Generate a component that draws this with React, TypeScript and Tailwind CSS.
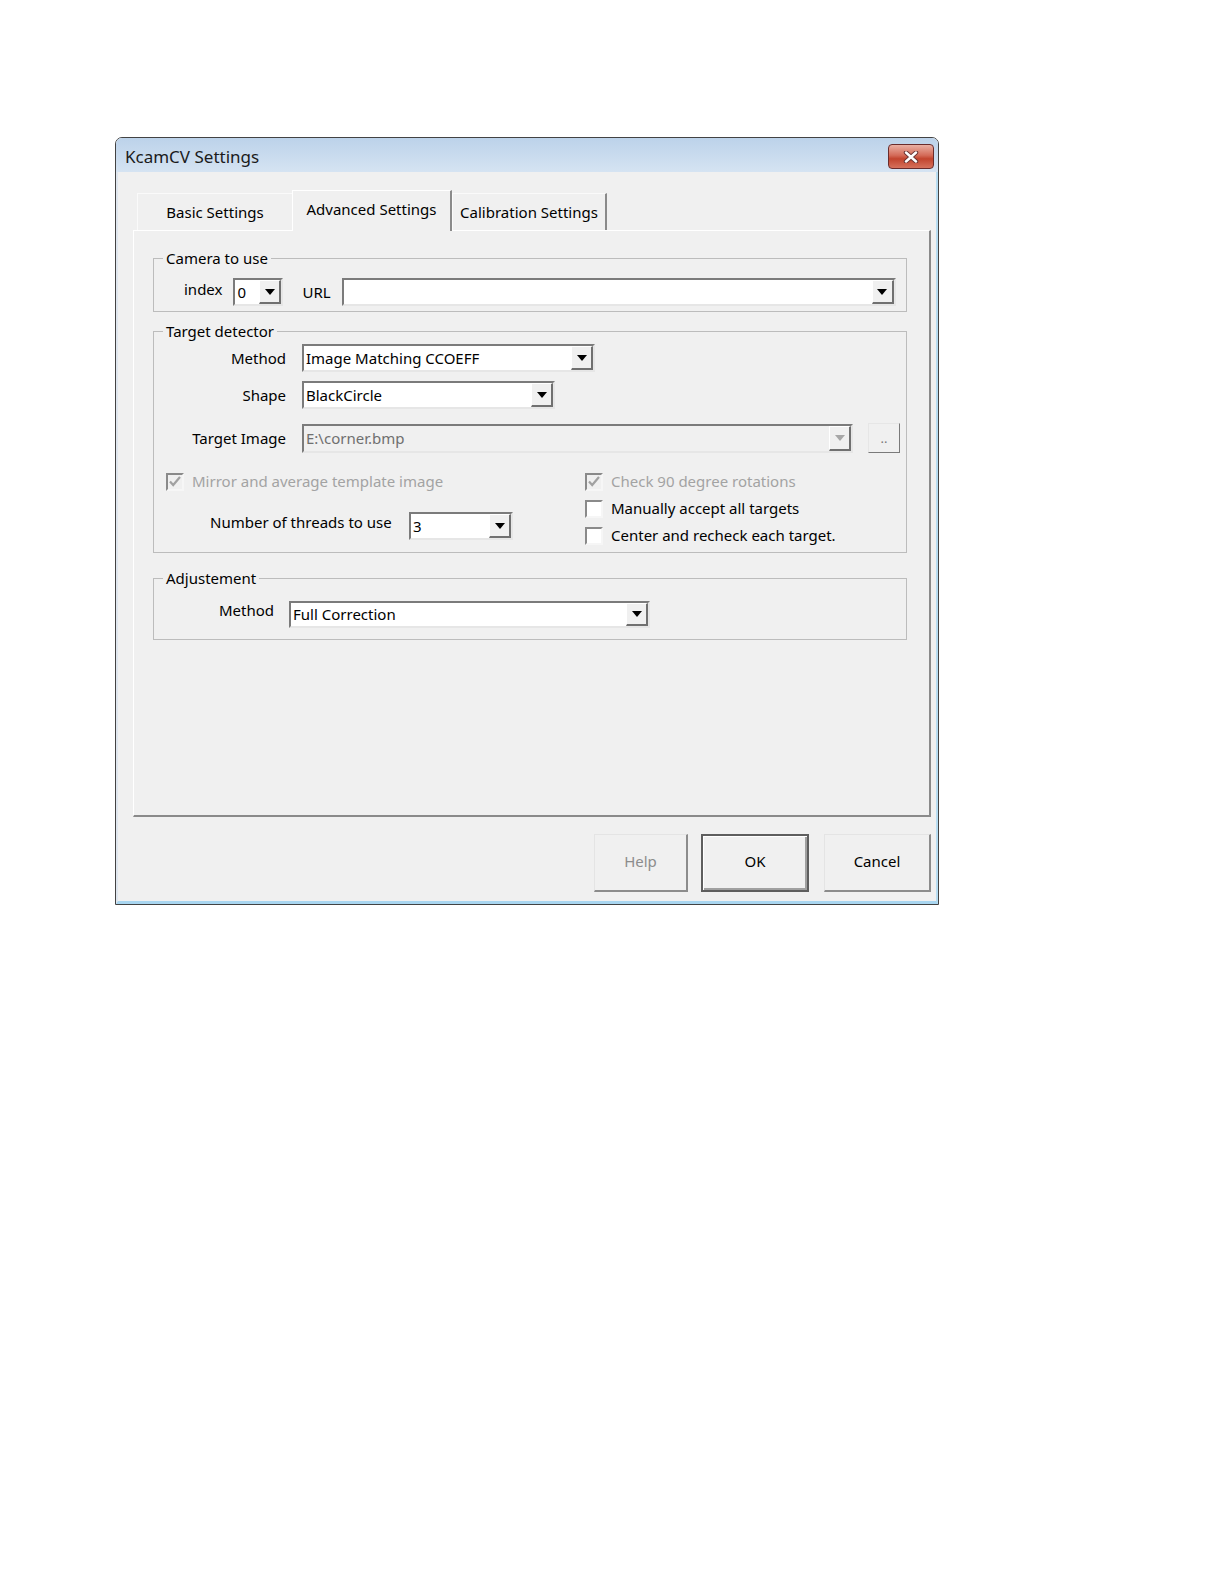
import React from "react"

function Arrow({ disabled }: { disabled?: boolean }) {
  return (
    <svg width="10" height="6" viewBox="0 0 10 6">
      <path d="M0 0h10L5 6z" fill={disabled ? "#a7a7a7" : "#000"} />
    </svg>
  )
}

function Combo({
  value,
  className,
  disabled,
}: {
  value: string
  className: string
  disabled?: boolean
}) {
  return (
    <div
      className={`flex border-2 border-t-[#7b7b7b] border-l-[#7b7b7b] border-r-[#e6e6e6] border-b-[#e6e6e6] ${
        disabled ? "bg-[#f0f0f0]" : "bg-white"
      } ${className}`}
    >
      <div
        className={`flex-1 flex items-center pl-[2px] text-[15px] leading-none ${
          disabled ? "text-[#6f6f6f]" : "text-black"
        }`}
      >
        {value}
      </div>
      <div className="w-[22px] flex items-center justify-center bg-[#f0f0f0] border-t border-l border-white border-r-2 border-b-2 border-r-[#707070] border-b-[#707070]">
        <Arrow disabled={disabled} />
      </div>
    </div>
  )
}

function Check({ label, checked, disabled }: { label: string; checked?: boolean; disabled?: boolean }) {
  return (
    <div className="flex items-center h-[27px]">
      <div
        className={`w-[18px] h-[18px] flex items-center justify-center border-2 border-t-[#8a8a8a] border-l-[#8a8a8a] border-r-[#f6f6f6] border-b-[#f6f6f6] ${
          disabled ? "bg-[#f0f0f0]" : "bg-white"
        }`}
      >
        {checked && (
          <svg width="12" height="11" viewBox="0 0 12 11">
            <path d="M1 5.5l3.2 3.5L11 1" fill="none" stroke="#a1a1a1" strokeWidth="2.2" />
          </svg>
        )}
      </div>
      <span className={`ml-[8px] text-[15px] ${disabled ? "text-[#a3a3a3]" : "text-black"}`}>{label}</span>
    </div>
  )
}

function Group({ title, className, children }: { title: string; className: string; children: React.ReactNode }) {
  return (
    <fieldset className={`border border-[#bcbcbc] ${className}`}>
      <legend className="ml-[9px] px-[3px] text-[15px] leading-[20px] text-black">{title}</legend>
      {children}
    </fieldset>
  )
}

const tabs = [
  { name: "Basic Settings", active: false },
  { name: "Advanced Settings", active: true },
  { name: "Calibration Settings", active: false },
]

export default function App() {
  return (
    <div className="min-h-[1584px] bg-white pt-[137px] pl-[115px] font-['Noto_Sans',sans-serif]">
      <div className="w-[824px] h-[768px] flex flex-col border border-[#434343] rounded-t-[7px] overflow-hidden">
        {/* title bar */}
        <div className="h-[34px] flex justify-between bg-[linear-gradient(to_bottom,#bcd2ea,#d5e3f2)]">
          <div className="pl-[9px] pt-[6px] text-[17px] text-[#1b1b1b]">KcamCV Settings</div>
          <div className="pt-[6px] pr-[4px]">
            <div className="w-[46px] h-[25px] rounded-[4px] border border-[#6a2c2c] flex items-center justify-center bg-[linear-gradient(to_bottom,#eab0a4,#d46b58_45%,#c2442e_60%,#d6715c)]">
              <svg width="16" height="12" viewBox="0 0 16 12">
                <path d="M3 1.5l10 9M13 1.5l-10 9" stroke="#6b3636" strokeWidth="4.4" strokeLinecap="round" />
                <path d="M3 1.5l10 9M13 1.5l-10 9" stroke="#fff" strokeWidth="2.4" strokeLinecap="round" />
              </svg>
            </div>
          </div>
        </div>

        {/* body */}
        <div className="flex-1 flex flex-col bg-[#f0f0f0] border-l-2 border-l-[#dfe6ee] border-r-2 border-r-[#b7dcf1] border-b-[3px] border-b-[#a9d6f0] pl-[15px] pr-[5px] pt-[18px]">
          {/* tabs */}
          <div className="h-[40px] flex items-end ml-[4px]">
            {tabs.map((t) =>
              t.active ? (
                <div
                  key={t.name}
                  className="relative z-10 -mb-px h-[41px] w-[160px] flex justify-center pt-[7px] bg-[#f0f0f0] border-t border-l border-white border-r-2 border-r-[#8a8a8a] text-[15px] text-black"
                >
                  {t.name}
                </div>
              ) : (
                <div
                  key={t.name}
                  className={`h-[37px] w-[155px] flex justify-center pt-[7px] border-t border-l border-t-[#fafafa] border-l-[#fafafa] text-[15px] text-black ${
                    t.name === "Calibration Settings" ? "border-r-2 border-r-[#8a8a8a]" : ""
                  }`}
                >
                  {t.name}
                </div>
              )
            )}
          </div>

          {/* panel */}
          <div className="h-[587px] flex flex-col border-t border-l border-white border-r-2 border-b-2 border-r-[#8a8a8a] border-b-[#8a8a8a] pl-[19px] pr-[22px] pt-[17px]">
            <Group title="Camera to use" className="pt-[10px] pb-[5px]">
              <div className="flex items-center h-[28px]">
                <span className="ml-[30px] -mt-[6px] text-[15px]">index</span>
                <Combo value="0" className="ml-[11px] w-[50px] h-[28px]" />
                <span className="ml-[19px] text-[15px]">URL</span>
                <Combo value="" className="ml-[11px] w-[554px] h-[28px]" />
              </div>
            </Group>

            <Group title="Target detector" className="mt-[9px] pt-[3px]">
              <div className="flex items-center">
                <span className="w-[132px] text-right text-[15px]">Method</span>
                <Combo value="Image Matching CCOEFF" className="ml-[16px] w-[293px] h-[28px]" />
              </div>
              <div className="flex items-center mt-[9px]">
                <span className="w-[132px] text-right text-[15px]">Shape</span>
                <Combo value="BlackCircle" className="ml-[16px] w-[253px] h-[28px]" />
              </div>
              <div className="flex items-center mt-[15px]">
                <span className="w-[132px] text-right text-[15px]">Target Image</span>
                <Combo value="E:\corner.bmp" disabled className="ml-[16px] w-[551px] h-[29px]" />
                <div className="ml-[15px] w-[32px] h-[30px] -mt-px flex items-center justify-center bg-[#f0f0f0] border border-[#e6e6e6] border-r-[#7a7a7a] border-b-[#7a7a7a] text-[13px] text-[#7a7a7a] leading-none">
                  ..
                </div>
              </div>
              <div className="flex mt-[15px] pb-[3px]">
                <div className="ml-[12px] w-[419px]">
                  <Check label="Mirror and average template image" checked disabled />
                  <div className="flex items-center mt-[17px] h-[28px]">
                    <span className="ml-[44px] w-[185px] -mt-[8px] text-[15px]">Number of threads to use</span>
                    <Combo value="3" className="ml-[14px] w-[104px] h-[28px]" />
                  </div>
                </div>
                <div>
                  <Check label="Check 90 degree rotations" checked disabled />
                  <Check label="Manually accept all targets" />
                  <Check label="Center and recheck each target." />
                </div>
              </div>
            </Group>

            <Group title="Adjustement" className="mt-[15px] pt-[13px] pb-[11px]">
              <div className="flex items-center">
                <span className="ml-[65px] -mt-[8px] text-[15px]">Method</span>
                <Combo value="Full Correction" className="ml-[15px] w-[361px] h-[27px]" />
              </div>
            </Group>
          </div>

          {/* buttons */}
          <div className="flex justify-end mt-[17px] h-[58px]">
            <button className="w-[94px] h-[58px] pb-[3px] bg-[#f0f0f0] border border-[#e4e4e4] border-r-2 border-b-2 border-r-[#8c8c8c] border-b-[#8c8c8c] text-[15px] text-[#8c8c8c]">
              Help
            </button>
            <button className="ml-[13px] w-[108px] h-[58px] pb-[3px] bg-[#f0f0f0] border-2 border-[#5e5e5e] shadow-[inset_1px_1px_0_#ffffff,inset_-2px_-2px_0_#a0a0a0] text-[15px] text-black">
              OK
            </button>
            <button className="ml-[15px] w-[107px] h-[58px] pb-[3px] bg-[#f0f0f0] border border-[#e4e4e4] border-r-2 border-b-2 border-r-[#8c8c8c] border-b-[#8c8c8c] text-[15px] text-black">
              Cancel
            </button>
          </div>
        </div>
      </div>
    </div>
  )
}
